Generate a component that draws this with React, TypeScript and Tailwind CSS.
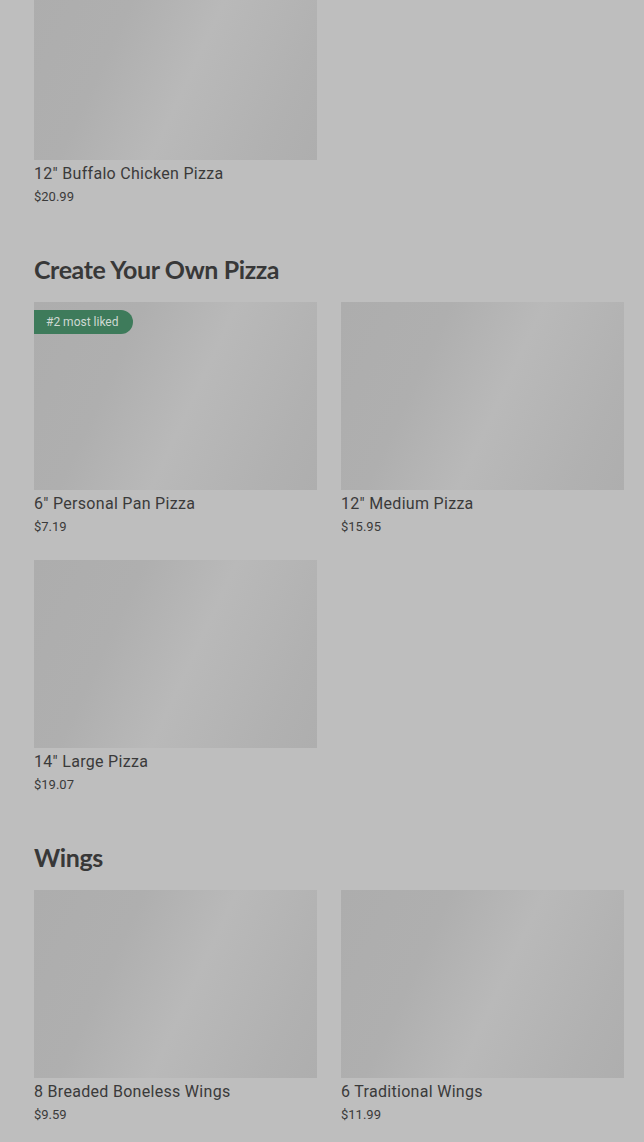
type Item = { name: string; price: string; badge?: string };

const SECTIONS: { title?: string; items: Item[] }[] = [
  { items: [{ name: '12" Buffalo Chicken Pizza', price: "$20.99" }] },
  {
    title: "Create Your Own Pizza",
    items: [
      { name: '6" Personal Pan Pizza', price: "$7.19", badge: "#2 most liked" },
      { name: '12" Medium Pizza', price: "$15.95" },
      { name: '14" Large Pizza', price: "$19.07" },
    ],
  },
  {
    title: "Wings",
    items: [
      { name: "8 Breaded Boneless Wings", price: "$9.59" },
      { name: "6 Traditional Wings", price: "$11.99" },
    ],
  },
];

function Card({ item }: { item: Item }) {
  return (
    <div className="flex flex-col">
      <div className="relative h-[188px] bg-[linear-gradient(115deg,#adadad_0%,#afafaf_30%,#b9b9b9_55%,#b1b1b1_85%,#aeaeae_100%)]">
        {item.badge && (
          <span className="absolute left-0 top-[8px] h-[24px] pl-[12px] pr-[14px] flex items-center rounded-r-full bg-[#3e7b5b] text-[12px] text-[#cfd9d3] font-['Roboto',sans-serif]">
            {item.badge}
          </span>
        )}
      </div>
      <div className="mt-[2px] h-[24px] leading-[24px] text-[16px] text-[#3a3a3a] font-['Roboto',sans-serif] tracking-[0.3px]">
        {item.name}
      </div>
      <div className="h-[22px] leading-[22px] text-[13px] text-[#3a3a3a] font-['Roboto',sans-serif]">
        {item.price}
      </div>
    </div>
  );
}

export default function App() {
  return (
    <div className="min-h-[1142px] bg-[#bebebe] overflow-hidden">
      <div className="pl-[34px] pr-[20px] -mt-[28px] pb-[40px]">
        {SECTIONS.map((s, i) => (
          <section key={i}>
            {s.title && (
              <h2 className="mt-[46px] mb-[18px] h-[30px] leading-[30px] text-[25px] font-bold text-[#383838] font-['Lato',sans-serif] tracking-[-0.4px]">
                {s.title}
              </h2>
            )}
            <div className="grid grid-cols-2 gap-x-[24px] gap-y-[22px]">
              {s.items.map((it) => (
                <Card key={it.name} item={it} />
              ))}
            </div>
          </section>
        ))}
      </div>
    </div>
  );
}
